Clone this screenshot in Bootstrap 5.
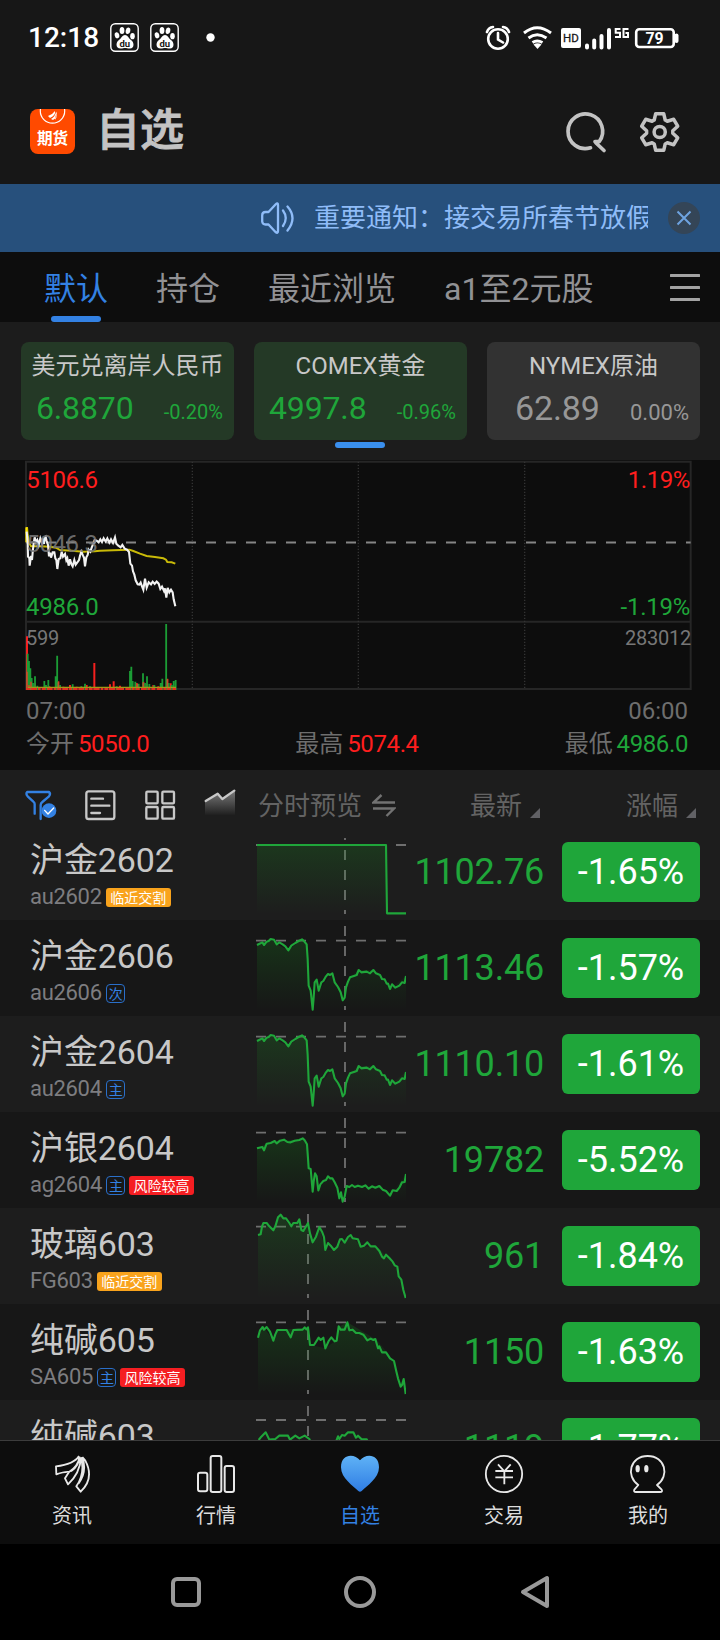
<!DOCTYPE html>
<html lang="zh-CN">
<head>
<meta charset="utf-8">
<meta name="viewport" content="width=device-width, initial-scale=1">
<title>自选</title>
<link href="https://cdn.jsdelivr.net/npm/bootstrap@5.3.0/dist/css/bootstrap.min.css" rel="stylesheet">
<style>
:root{--up:#ff1e1e;--down:#1fa63a;--brand:#3381e3;--txt:#c8c8c8;--dim:#6e6e6e}
body{font-family:Roboto,"Noto Sans CJK SC",sans-serif;background:#0d0d0d;color:var(--txt);width:720px;height:1640px;overflow:hidden;margin:0}
svg{display:block;flex:none}
svg text{font-family:Roboto,"Noto Sans CJK SC",sans-serif}
.top-bg{background:#171717}
.status{height:75px;padding:0 40px 0 28px;color:#fff}
.clock{font-size:28px;font-weight:500;line-height:32px;padding-top:1px}
.paw{margin-left:11px}
.dot{margin-left:27px}
.head{height:109px;padding:0 40px 0 30px}
.logo-app{width:45px;height:45px;border-radius:8px;overflow:hidden;margin-top:34px}
.page-title{font-size:44px;font-weight:500;line-height:48px;color:#c3c3c3;-webkit-text-stroke:.9px #c3c3c3;margin:32px 0 0 21px}
.head-icons{margin-top:33px}
.notice{height:68px;background:#27507c;color:#8fbcf8;padding:0 20px 0 261px}
.notice-text{font-size:26px;line-height:40px;width:334px;white-space:nowrap;overflow:hidden;margin-left:20px}
.tabs{height:70px;font-size:32px;line-height:74px;color:#919194;padding:0 20px 0 44px;gap:48px;white-space:nowrap}
.tabs .on{color:var(--brand);position:relative}
.tabs .on::after{content:"";position:absolute;left:7px;top:64px;width:50px;height:6px;border-radius:3px;background:var(--brand)}
.menu-icon{margin-top:21px}
.quotes{height:138px;background:#1c1c1c;padding:20px 20px 0 21px}
.quote-grid{display:grid;grid-template-columns:repeat(3,213px);gap:20px}
.quote{height:98px;border-radius:8px;background:#243926;color:var(--down);padding:5px 11px 0 15px}
.quote.flat{background:#323232;color:#979797;padding-left:28px}
.quote-name{font-size:24px;line-height:38px;height:36px;color:#c8c8c8;text-align:center;white-space:nowrap}
.quote:not(.flat) .quote-name{margin:0 -4px 0 -8px}
.quote.flat .quote-name{margin:0 -11px 0 -28px}
.quote-row{line-height:50px}
.quote-row b{font-size:32px;font-weight:400;letter-spacing:-.15px}
.quote-row i{font-size:20px;font-style:normal}
.flat .quote-row b{font-size:34px}.flat .quote-row i{font-size:22px}
.pager{width:50px;height:6px;border-radius:3px;background:#3a8fee;margin:2px 0 0 314px}
.chart-box{height:310px}
.chart-foot{font-size:24px;color:var(--dim);padding:3px 32px 0 26px}
.chart-foot>div{line-height:32px}
.chart-foot>div+div{padding-top:1px}
.num{letter-spacing:-.4px;margin-left:-2px}
.red{color:var(--up)}.green{color:var(--down)}
.list-head{height:68px;background:#1d1d1d;color:#636363;font-size:26px;line-height:72px;padding:0 24px 0 25px}
.tools{margin-top:18px}
.sorter{margin:38px 0 0 8px}
.rows{height:602px;overflow:hidden}
.quote-item{height:96px;background:#171717;padding-right:20px}
.quote-item:nth-child(odd){background:#1d1d1d}
.quote-item:first-child{margin-top:-14px}
.name-col{width:256px;padding:16px 0 0 30px}
.name-col h2{font-size:34px;line-height:40px;font-weight:400;margin:0 0 4px;color:#c8c8c8;letter-spacing:-.1px}
.code{font-size:22px;line-height:26px;color:#7d7d80;gap:4px;height:25px}
.code span:first-child{letter-spacing:-.3px}
.tag{font-size:14px;line-height:20px;height:19px;border-radius:3px;color:#fff;width:65px;text-align:center;margin-top:3.5px;white-space:nowrap}
.tag.o{background:#f9a31c}.tag.r{background:#f51e22}
.tag.b{width:19px;border:1px solid #2a6fc9;color:#3381e3;line-height:18px;font-size:14px;border-radius:4px;text-indent:1px}
.price{width:138px;font-size:36px;line-height:97px;text-align:right;color:var(--down);letter-spacing:-.2px}
.pct{width:138px;height:60px;margin:18px 0 0 18px;border-radius:6px;background:var(--down);color:#fff;font-size:36px;line-height:61px;text-align:center}
.spark .dash{stroke:#6f6f6f;stroke-width:5.5;stroke-dasharray:30 30;fill:none}
.spark .ln{stroke:#1fa63a;stroke-width:6.3;fill:none;stroke-linejoin:round}
.bottom{height:104px;background:#0d0d0d;border-top:1px solid #3c3c3c;color:#dcdcdc;font-size:20px;line-height:28px}
.bottom>div{width:144px;padding-top:13px}
.bottom svg{margin-bottom:8px}
.bottom .here{color:var(--brand)}
.sys{height:96px;background:#000}
</style>
</head>
<body class="d-flex flex-column">
<svg width="0" height="0" class="position-absolute"><defs>
<linearGradient id="fade" x1="0" y1="0" x2="0" y2="1"><stop offset="0" stop-color="#18a020" stop-opacity=".2"/><stop offset="1" stop-color="#18a020" stop-opacity="0"/></linearGradient>
<linearGradient id="heart" x1="0" y1="0" x2="0" y2="1"><stop offset="0" stop-color="#5fb2f6"/><stop offset="1" stop-color="#2f7de4"/></linearGradient>
<linearGradient id="grey" x1="0" y1="0" x2="0" y2="1"><stop offset="0" stop-color="#999" stop-opacity=".75"/><stop offset=".9" stop-color="#999" stop-opacity="0"/></linearGradient>
<g id="paw"><rect x=".8" y=".8" width="27.4" height="27.4" rx="4.5" fill="none" stroke="#fff" stroke-width="1.4"/><g fill="#fff"><ellipse cx="12" cy="7.6" rx="2.4" ry="3.5"/><ellipse cx="18" cy="7.8" rx="2.3" ry="3.3" transform="rotate(10 18 7.8)"/><ellipse cx="7" cy="12.3" rx="2.3" ry="3.1" transform="rotate(-12 7 12.3)"/><ellipse cx="22.5" cy="13.2" rx="2.3" ry="3.1"/><path d="M15 12C12.5 12 11.500 15 9 17C5.500 19.500 5.500 25.300 10.500 25.500C12.500 25.600 13.500 25 15 25S18 25.600 20 25.500C24.500 25.300 24.500 19.500 21 17C18.500 15 17.500 12 15 12Z"/></g><text x="14.800" y="23.600" font-size="9.500" font-weight="700" text-anchor="middle" fill="#171717">du</text></g>
<path id="gold" d="M771 78L777 75 787 70 792 78 800 68 806 66 812 60 822 62 830 76 838 70 848 76 856 82 865 94 874 80 886 72 896 66 906 61 912 66 920 76 923 120 926 200 932 215 938 272 941 235 944 190 950 182 956 215 964 190 970 186 978 172 984 165 990 168 997 163 1004 190 1014 204 1022 220 1028 244 1034 236 1038 205 1044 188 1050 175 1064 170 1070 168 1076 153 1084 160 1100 158 1110 163 1120 153 1128 163 1140 168 1146 180 1154 181 1160 194 1164 194 1170 210 1176 196 1186 206 1198 200 1206 190 1214 192 1218 171"/>
</defs></svg>

<header class="top-bg">
  <div class="status d-flex align-items-center">
    <span class="clock">12:18</span>
    <svg class="paw" width="29" height="29"><use href="#paw"/></svg>
    <svg class="paw" width="29" height="29"><use href="#paw"/></svg>
    <svg class="dot" width="9" height="9"><circle cx="4.5" cy="4.500" r="4.200" fill="#fff"/></svg>
    <svg class="ms-auto" width="195" height="28" viewBox="485 23 195 28" fill="none" stroke="#fff" stroke-width="2.6">
      <circle cx="498" cy="38" r="9.8"/><path d="M498 32V38.5L503 41.5M487 31Q488.500 26.500 493 26M509 31Q507.500 26.500 503 26" stroke-linecap="round"/>
      <path d="M524 32Q537 21.500 551 32M528.500 37Q537 30.500 546.500 37M532.500 41.500Q537 38.500 542.500 41.500" stroke-width="2.900"/><path d="M533.500 43.500L537.500 48 541.500 43.500Q537.500 41 533.500 43.500Z" fill="#fff" stroke="none"/>
      <rect x="561" y="27" width="20" height="20" rx="2" fill="#fff" stroke="none"/><text x="571" y="41.300" text-anchor="middle" font-size="11.500" fill="#171717" stroke="#171717" stroke-width=".3">HD</text>
      <path d="M587 44.500V46.500M594.200 39.500V46.500M601.500 35V46.500M609 29V46.500" stroke-width="4" stroke-linecap="round"/>
      <path d="M620.500 28H615.700V31.800H620V36H615M628.500 28H623.500V36H628V32H625.500" stroke-width="2"/>
      <rect x="636.200" y="28.200" width="37.500" height="17.800" rx="3"/><path d="M676.500 34.500V40" stroke-width="4" stroke-linecap="round"/>
      <text x="654.500" y="42.900" text-anchor="middle" font-size="15.800" font-weight="700" fill="#fff" stroke="none">79</text>
    </svg>
  </div>
  <div class="head d-flex">
    <svg class="logo-app" viewBox="0 0 45 45"><rect width="45" height="45" fill="#ff4a00"/><circle cx="22.500" cy="2" r="12.200" fill="none" stroke="#fff" stroke-width="1.200"/><path d="M18 7Q22 6 25 2Q26 6 20 9ZM21 10Q25 8 26 3Q28 8 23 11ZM25 11Q28 7 26.500 2.500" fill="#fff"/><text x="22.500" y="35.300" text-anchor="middle" font-size="15.600" font-weight="700" fill="#fff">期货</text></svg>
    <div class="page-title">自选</div>
    <svg class="ms-auto head-icons" width="118" height="48" viewBox="562 108 118 48" fill="none" stroke="#c3c3c3" stroke-width="3.700" stroke-linecap="round" stroke-linejoin="round"><path d="M590.500 147.800A17.300 17.300 0 1 1 599.300 141.500M595 141.500H599M595.500 142.500L604 150.500"/><g transform="translate(659.700 132)" stroke-width="3.500"><path d="M-5.500-12L-4-18.300H4L5.500-12 7.600-10.800 14-12.700 18-5.800 13.100-1.200V1.200L18 5.800 14 12.700 7.600 10.800 5.500 12 4 18.300H-4L-5.500 12-7.600 10.800-14 12.700-18 5.800-13.100 1.200V-1.200L-18-5.800-14-12.700-7.600-10.800Z"/><circle r="5.600"/></g></svg>
  </div>
</header>

<div class="notice d-flex align-items-center">
  <svg width="33" height="33" viewBox="0 0 33 33" fill="none" stroke="#8fbcf8" stroke-width="2.300" stroke-linecap="round" stroke-linejoin="round"><path d="M17 3V29Q17 32 14.500 30L7.500 22.500H4.500Q1.500 22.500 1.200 19.500V13.500Q1.200 10 4.500 10H7.500L14.500 2.500Q17 0 17 3M22 8.500Q27.500 16 22 24M26.500 4.500Q36.500 16 26.500 28.500"/></svg>
  <div class="notice-text">重要通知：接交易所春节放假</div>
  <svg class="ms-auto" width="32" height="32" viewBox="-16 -16 32 32"><circle r="16" fill="#344557"/><path d="M-6.500-6.500L6.500 6.500M6.500-6.500L-6.500 6.500" stroke="#6ea3e0" stroke-width="2"/></svg>
</div>

<nav class="tabs d-flex">
  <span class="on">默认</span><span>持仓</span><span>最近浏览</span><span>a1至2元股</span>
  <svg class="ms-auto menu-icon" width="30" height="29"><path d="M1 2.500H29M1 14.500H29M1 26.500H29" stroke="#a3a3a3" stroke-width="2.900" stroke-linecap="round"/></svg>
</nav>

<section class="quotes">
  <div class="quote-grid">
    <div class="quote"><div class="quote-name">美元兑离岸人民币</div><div class="quote-row d-flex justify-content-between align-items-baseline"><b>6.8870</b><i>-0.20%</i></div></div>
    <div class="quote"><div class="quote-name">COMEX黄金</div><div class="quote-row d-flex justify-content-between align-items-baseline"><b>4997.8</b><i>-0.96%</i></div></div>
    <div class="quote flat"><div class="quote-name">NYMEX原油</div><div class="quote-row d-flex justify-content-between align-items-baseline"><b>62.89</b><i>0.00%</i></div></div>
  </div>
  <div class="pager"></div>
</section>

<section class="chart-box">
  <svg width="720" height="232" viewBox="0 15 2160 696" fill="none">
    <path d="M78 20H2072V702H78ZM78 500H2072" stroke="#262626" stroke-width="6"/>
    <path d="M577 20V702M1075 20V702M1574 20V702" stroke="#333" stroke-width="4" stroke-dasharray="4 5"/>
    <path d="M78 262.500H2072" stroke="#858585" stroke-width="6" stroke-dasharray="30 30"/>
    <path d="M81 216L83 240 87 262 93 274 120 274 150 275 168 278 180 285 215 287 250 290 285 289 300 287 340 286 388 284 400 288 420 296 440 303 465 306 490 310 498 314 502 321 515 322 526 326" stroke="#c9ba08" stroke-width="6"/>
    <path d="M79 217V262" stroke="#ffe600" stroke-width="6"/>
    <path d="M80 230L83 262 84 305 88 309 89 332 93 303 96 315 99 282 101 265 104 247 108 262 112 255 116 270 121 250 126 264 129 250 132 267 134 250 137 246 140 258 144 270 147 304 150 293 153 308 158 292 163 292 166 310 169 315 172 342 176 312 181 310 185 290 189 305 195 297 199 316 202 310 206 332 210 313 214 327 218 334 223 315 227 329 232 322 237 315 240 302 244 290 249 302 252 308 255 334 259 307 263 300 266 284 271 290 275 278 279 268 284 255 290 257 296 262 301 253 306 261 311 250 317 260 322 250 328 263 333 253 339 264 345 247 349 266 355 272 362 277 367 270 374 281 381 284 387 291 391 326 396 332 399 349 403 359 407 376 413 388 418 389 422 383 426 394 430 404 435 371 440 398 446 382 453 388 458 380 464 387 470 380 476 386 481 402 486 395 492 408 495 400 499 428 503 399 508 412 513 404 518 412 521 433 526 454" stroke="#f2f2f2" stroke-width="6.300"/>
    <path d="M81 705V544M283 705V624M341 705V679M175 705V679M430 705V680M502 705V671M410 705V684M440 705V687M460 705V690M105 705V685M148 705V694M210 705V690M260 705V690M330 705V688M512 705V685M190 705V695M230 705V695M360 705V692M475 705V694" stroke="#f4201e" stroke-width="6"/>
    <path d="M83 705V596M87 705V618M91 705V640M95 705V669M99 705V684M105 705V664M112 705V692M133 705V678M138 705V690M145 705V675M167 705V664M171.500 705V602M180 705V690M218 705V688M244 705V694M255 705V686M270 705V694M350 705V694M390 705V648M394 705V635M398 705V678M406 705V680M416 705V686M429 705V655M435 705V684M441 705V664M448 705V687M463 705V690M482 705V684M487 705V671M498.500 705V507M506 705V684M515 705V690M521 705V678M527 705V675" stroke="#1b9c35" stroke-width="5.500"/>
    <path d="M81 705V650M87 705V690M93 705V680M175 705V682M430 705V682M502 705V673M412 705V686" stroke="#c4502c" stroke-width="5"/>
    <path d="M78 702H528" stroke="#e0301e" stroke-width="6" stroke-dasharray="12 4 17 3 8 3"/><path d="M84 697H528" stroke="#a09a17" stroke-width="4"/>
    <g font-size="72" letter-spacing="-1.300"><text x="79" y="98" fill="#ff1e1e">5106.6</text><text x="79" y="290" fill="#777" fill-opacity=".9">5046.3</text><text x="78" y="479" fill="#1fa63a" letter-spacing="-.6">4986.0</text><text x="2070" y="98" text-anchor="end" fill="#ff1e1e">1.19%</text><text x="2070" y="479" text-anchor="end" fill="#1fa63a" letter-spacing="-.8">-1.19%</text></g>
    <g font-size="60" fill="#777" letter-spacing="-.7"><text x="78" y="570">599</text><text x="2073" y="570" text-anchor="end">283012</text></g>
  </svg>
  <div class="chart-foot">
    <div class="d-flex justify-content-between"><span>07:00</span><span>06:00</span></div>
    <div class="d-flex justify-content-between"><span>今开 <span class="red num">5050.0</span></span><span>最高 <span class="red num">5074.4</span></span><span>最低 <span class="green num">4986.0</span></span></div>
  </div>
</section>

<div class="list-head d-flex">
  <svg class="tools" width="212" height="34" viewBox="75 69 636 102" fill="none" stroke="#c8c8c8" stroke-width="7" stroke-linejoin="round" stroke-linecap="round">
    <path d="M104 146V117Q104 113 100 110L83 94Q76 86 82 81H147Q153 86 147 94L127 111Q122 115 122 120V162" stroke="#3381e3"/><circle cx="147" cy="137" r="22" fill="#3381e3" stroke="none"/><path d="M134 136L144 147 161 129" stroke="#fff" stroke-width="4"/>
    <rect x="259" y="79" width="84" height="83" rx="7"/><path d="M274 101H309M274 122H328M274 144H300"/>
    <rect x="439" y="80" width="34" height="35" rx="3"/><rect x="487" y="80" width="35" height="35" rx="3"/><rect x="439" y="126" width="34" height="35" rx="3"/><rect x="487" y="126" width="35" height="35" rx="3"/>
    <path d="M615 108L655 85 667 102 705 77V160H615Z" fill="url(#grey)" stroke="none"/><path d="M617 108L653 86 667 102 703 77"/>
  </svg>
  <span style="margin-left:21px">分时预览</span>
  <svg style="margin:24px 0 0 10px" width="24" height="24" fill="none" stroke="#727272" stroke-width="2.400"><path d="M9.500 1L1.500 8.500H23M1 14.500H22L14.500 22"/></svg>
  <span style="margin-left:74px">最新</span><svg class="sorter" width="10" height="10"><path d="M10 0V10H0Z" fill="#616165"/></svg>
  <span style="margin-left:86px">涨幅</span><svg class="sorter" width="10" height="10"><path d="M10 0V10H0Z" fill="#616165"/></svg>
</div>

<main class="rows">
  <div class="quote-item d-flex"><div class="name-col"><h2>沪金2602</h2><div class="code d-flex"><span>au2602</span><span class="tag o">临近交割</span></div></div>
    <svg class="spark" width="150" height="96" viewBox="768 177 450 288"><path class="dash" d="M768 240H1218M1035 195V447"/><path d="M771 240H1158V447H771Z" fill="url(#fade)"/><path class="ln" d="M771 240H1158L1161 445H1218"/></svg>
    <div class="price">1102.76</div><div class="pct">-1.65%</div></div>
  <div class="quote-item d-flex"><div class="name-col"><h2>沪金2606</h2><div class="code d-flex"><span>au2606</span><span class="tag b">次</span></div></div>
    <svg class="spark" width="150" height="96" viewBox="768 3 450 288"><path class="dash" d="M768 65H1218M1035 21V273"/><path d="M771 78L812 60 830 76 865 94 906 61 920 76 926 200 938 272 950 182 956 215 997 163 1028 244 1050 175 1076 153 1120 153 1170 210 1218 171V273H771Z" fill="url(#fade)"/><use href="#gold" class="ln"/></svg>
    <div class="price">1113.46</div><div class="pct">-1.57%</div></div>
  <div class="quote-item d-flex"><div class="name-col"><h2>沪金2604</h2><div class="code d-flex"><span>au2604</span><span class="tag b">主</span></div></div>
    <svg class="spark" width="150" height="96" viewBox="768 3 450 288"><path class="dash" d="M768 65H1218M1035 21V273"/><path d="M771 78L812 60 830 76 865 94 906 61 920 76 926 200 938 272 950 182 956 215 997 163 1028 244 1050 175 1076 153 1120 153 1170 210 1218 171V273H771Z" fill="url(#fade)"/><use href="#gold" class="ln"/></svg>
    <div class="price">1110.10</div><div class="pct">-1.61%</div></div>
  <div class="quote-item d-flex"><div class="name-col"><h2>沪银2604</h2><div class="code d-flex"><span>ag2604</span><span class="tag b">主</span><span class="tag r">风险较高</span></div></div>
    <svg class="spark" width="150" height="96" viewBox="768 291 450 288"><path class="dash" d="M768 353H1218M1035 309V561"/><path d="M771 400L800 386 830 380 910 371 922 390 926 460 938 530 946 475 955 525 985 485 1000 490 1028 558 1040 513 1140 516 1170 540 1218 478V561H771Z" fill="url(#fade)"/><path class="ln" d="M771 400L787 396 792 406 800 386 812 384 824 378 830 385 840 377 852 374 862 381 872 382 884 377 898 375 908 370 914 376 921 388 924 430 926 460 932 462 938 530 941 500 945 475 950 484 955 526 961 508 970 498 978 495 984 484 990 490 997 490 1004 502 1012 518 1018 550 1023 532 1028 560 1034 545 1040 513 1048 516 1056 510 1064 516 1074 512 1086 516 1096 511 1106 521 1116 514 1126 518 1138 513 1148 524 1158 528 1170 542 1178 526 1190 528 1198 518 1206 502 1214 501 1218 477"/></svg>
    <div class="price">19782</div><div class="pct">-5.52%</div></div>
  <div class="quote-item d-flex"><div class="name-col"><h2>玻璃603</h2><div class="code d-flex"><span>FG603</span><span class="tag o">临近交割</span></div></div>
    <svg class="spark" width="150" height="96" viewBox="768 9 450 288"><path class="dash" d="M768 65H1218M924 27V279"/><path d="M774 90L790 54 820 75 842 29 870 62 898 43 906 78 924 54 938 110 958 66 976 135 1000 135 1050 90 1085 125 1130 125 1192 185 1218 279H774Z" fill="url(#fade)"/><path class="ln" d="M774 90L782 88 786 65 790 54 800 54 808 64 820 76 826 64 834 37 842 29 850 40 858 40 868 54 874 64 880 54 892 54 898 43 904 75 910 78 924 54 930 85 938 112 948 95 958 66 966 80 972 96 976 135 984 114 992 122 1002 135 1012 125 1020 103 1026 102 1034 113 1044 96 1052 90 1058 100 1074 103 1082 125 1092 122 1102 112 1112 124 1126 124 1138 138 1146 155 1152 160 1158 149 1168 159 1178 170 1184 181 1192 185 1196 214 1204 224 1210 255 1217 279"/></svg>
    <div class="price">961</div><div class="pct">-1.84%</div></div>
  <div class="quote-item d-flex"><div class="name-col"><h2>纯碱605</h2><div class="code d-flex"><span>SA605</span><span class="tag b">主</span><span class="tag r">风险较高</span></div></div>
    <svg class="spark" width="150" height="96" viewBox="768 297 450 288"><path class="dash" d="M768 352H1218M924 315V567"/><path d="M774 398L790 366 820 406 832 375 924 368 930 420 976 430 1010 405 1016 366 1042 352 1130 405 1180 465 1200 545 1218 567H774Z" fill="url(#fade)"/><path class="ln" d="M774 398L780 376 788 366 792 374 800 366 810 380 820 407 826 388 832 375 860 375 866 386 872 397 880 375 908 374 914 367 919 373 924 367 930 420 942 420 956 398 962 405 970 398 976 430 986 408 994 397 1004 409 1010 407 1016 364 1022 374 1034 374 1042 352 1048 376 1058 374 1068 384 1078 384 1090 389 1102 406 1112 401 1120 405 1126 402 1134 430 1138 424 1146 442 1158 442 1170 460 1182 468 1188 495 1194 520 1202 545 1206 540 1211 522 1217 567"/></svg>
    <div class="price">1150</div><div class="pct">-1.63%</div></div>
  <div class="quote-item d-flex"><div class="name-col"><h2>纯碱603</h2></div>
    <svg class="spark" width="150" height="96" viewBox="768 585 450 288"><path class="dash" d="M768 645H1218M924 603V855"/><path class="ln" d="M776 705L784 695 797 682 808 704 826 702 838 692 848 692 864 692 870 704 886 692 898 700 914 692 928 702 940 730 1008 710 1014 694 1018 702 1026 690 1034 692 1044 682 1060 682 1068 698 1074 692 1084 702 1100 703 1120 740"/></svg>
    <div class="price">1119</div><div class="pct">-1.77%</div></div>
</main>

<nav class="bottom d-flex text-center">
  <div><svg class="mx-auto" width="40" height="40" viewBox="156 72 120 120" fill="none" stroke="#e8e8e8" stroke-width="5.500" stroke-linejoin="round"><path d="M237 78Q222 103 168 109L169 133Q195 124 207 126Q234 110 239 80M207 126L195 145L204 163Q240 130 243 82M239 80Q237 108 213 124M243 82Q256 130 229 169L242 185Q284 145 256 92L247 81M247 81Q262 125 236 160"/></svg>资讯</div>
  <div><svg class="mx-auto" width="40" height="40" viewBox="588 72 120 120" fill="none" stroke="#e8e8e8" stroke-width="6"><rect x="594" y="128" width="28" height="56" rx="6"/><rect x="632" y="78" width="32" height="108" rx="6"/><rect x="674" y="108" width="28" height="78" rx="6"/></svg>行情</div>
  <div class="here"><svg class="mx-auto" width="40" height="40" viewBox="1020 72 120 120"><path d="M1080 91C1064 70 1023 70 1023 112C1023 145 1060 168 1075 183Q1080 188 1085 183C1100 168 1137 145 1137 112C1137 70 1096 70 1080 91Z" fill="url(#heart)"/></svg>自选</div>
  <div><svg class="mx-auto" width="40" height="40" viewBox="-60 -60 120 120" fill="none" stroke="#e8e8e8" stroke-width="5.500"><circle cy="0" r="54.500"/><path d="M-18-29L1-8 20-29M1-8V31M-26-9H27M-26 10H27"/></svg>交易</div>
  <div><svg class="mx-auto" width="40" height="40" viewBox="804 222 120 120" fill="none" stroke="#e8e8e8" stroke-width="5.500" stroke-linejoin="round"><path d="M835 315C796 288 810 228 863 228C916 228 930 288 891 315L905 329Q909 336 900 336H828Q820 336 823 329Z"/><path d="M838 314.500H888" stroke="none"/><g fill="#e8e8e8" stroke="none"><ellipse cx="833" cy="266" rx="6.500" ry="11"/><ellipse cx="859" cy="266" rx="6.500" ry="11"/></g></svg>我的</div>
</nav>
<div class="sys">
  <svg width="720" height="96" viewBox="0 1544 720 96" fill="none" stroke="#999" stroke-width="4" stroke-linejoin="round"><rect x="173" y="1579" width="26" height="26" rx="4"/><circle cx="360" cy="1592" r="14"/><path d="M523 1592L547 1578V1606Z"/></svg>
</div>
<script src="https://cdn.jsdelivr.net/npm/bootstrap@5.3.0/dist/js/bootstrap.bundle.min.js"></script>
</body>
</html>
